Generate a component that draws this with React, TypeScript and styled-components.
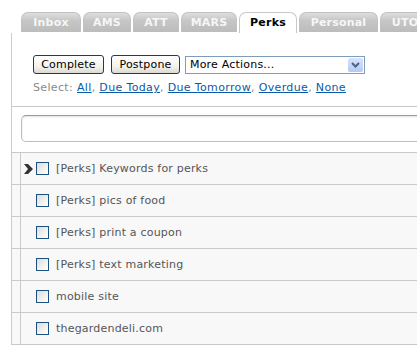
import styled, { createGlobalStyle } from "styled-components";

const Global = createGlobalStyle`
	html, body {
		margin: 0;
		padding: 0;
		background: #fff;
		overflow: hidden;
	}
	body {
		font-family: "DejaVu Sans", Verdana, sans-serif;
		font-size: 11px;
	}
`;

const tabs = [
	{ name: "Inbox", width: 60 },
	{ name: "AMS", width: 48 },
	{ name: "ATT", width: 46 },
	{ name: "MARS", width: 56 },
	{ name: "Perks", width: 58 },
	{ name: "Personal", width: 79 },
	{ name: "UTO", width: 50 },
];
const tasks = [
	"[Perks] Keywords for perks",
	"[Perks] pics of food",
	"[Perks] print a coupon",
	"[Perks] text marketing",
	"mobile site",
	"thegardendeli.com",
];
const links = ["All", "Due Today", "Due Tomorrow", "Overdue", "None"];

export default function App() {
	return (
		<>
			<Global />
			<Page>
				<TabBar>
					{tabs.map((t) => (
						<Tab key={t.name} $active={t.name === "Perks"} $w={t.width}>
							{t.name}
						</Tab>
					))}
				</TabBar>
				<Panel>
					<Actions>
						<ButtonRow>
							<Button $w={71}>Complete</Button>
							<Button $w={69}>Postpone</Button>
							<FakeSelect>
								<span>More Actions...</span>
								<SelectArrow>
									<svg width="9" height="6" viewBox="0 0 9 6">
										<path d="M1 1 L4.5 4.5 L8 1" fill="none" stroke="#4d6185" strokeWidth="2" />
									</svg>
								</SelectArrow>
							</FakeSelect>
						</ButtonRow>
						<SelectLine>
							Select:{" "}
							{links.map((l, i) => (
								<span key={l}>
									<Link href="#">{l}</Link>
									{i < links.length - 1 ? ", " : ""}
								</span>
							))}
						</SelectLine>
					</Actions>
					<SearchArea>
						<SearchInput />
					</SearchArea>
					<List>
						{tasks.map((t, i) => (
							<Row key={t}>
								<Gutter />
								<Cell>
									<Pointer>{i === 0 && <Chevron />}</Pointer>
									<Check />
									<TaskName>{t}</TaskName>
								</Cell>
							</Row>
						))}
					</List>
				</Panel>
			</Page>
		</>
	);
}

const Chevron = () => (
	<svg width="9" height="10" viewBox="0 0 9 10">
		<path d="M0 0 H4 L9 5 L4 10 H0 L4 5 Z" fill="#333" />
	</svg>
);

const Page = styled.div`
	padding: 12px 0 0 11px;
	width: 406px;
`;

const TabBar = styled.div`
	display: flex;
	gap: 2px;
	padding-left: 10px;
	height: 21px;
	white-space: nowrap;
	overflow: hidden;
`;

const Tab = styled.div<{ $active?: boolean; $w: number }>`
	flex: none;
	box-sizing: border-box;
	width: ${(p) => p.$w}px;
	height: ${(p) => (p.$active ? "22px" : "20px")};
	text-align: center;
	border-radius: 7px 7px 0 0;
	font-weight: bold;
	font-size: 11px;
	line-height: 19px;
	letter-spacing: 0.2px;
	border: 1px solid ${(p) => (p.$active ? "#c8c8c8" : "#c2c2c2")};
	border-bottom: none;
	color: ${(p) => (p.$active ? "#000" : "#f6f6f6")};
	background: ${(p) =>
		p.$active ? "#fff" : "linear-gradient(#dedede, #c6c6c6 40%, #bcbcbc)"};
	position: relative;
	z-index: 1;
`;

const Panel = styled.div`
	border-left: 1px solid #cfcdc2;
	border-bottom: 1px solid #c8c8c8;
`;

const Actions = styled.div`
	padding: 22px 0 0 21px;
	height: 51px;
	border-bottom: 1px solid #c8c8c8;
`;

const ButtonRow = styled.div`
	display: flex;
	align-items: flex-start;
	height: 19px;
`;

const Button = styled.button<{ $w: number }>`
	box-sizing: border-box;
	width: ${(p) => p.$w}px;
	height: 19px;
	padding: 0;
	margin-right: 7px;
	border: 1px solid #1c3a68;
	border-radius: 3px;
	background: linear-gradient(#ffffff, #f4f3ee 60%, #dcdad0);
	font-family: "DejaVu Sans", Verdana, sans-serif;
	font-size: 11px;
	letter-spacing: 0.2px;
	color: #000;
	line-height: 16px;
	&:last-of-type {
		margin-right: 5px;
	}
`;

const FakeSelect = styled.div`
	box-sizing: border-box;
	width: 180px;
	height: 18px;
	margin-top: 1px;
	border: 1px solid #7f9db9;
	display: flex;
	align-items: center;
	justify-content: space-between;
	padding-left: 4px;
	color: #000;
	letter-spacing: 0.2px;
	line-height: 16px;
`;

const SelectArrow = styled.div`
	width: 15px;
	height: 14px;
	margin-right: 1px;
	border-radius: 2px;
	background: linear-gradient(#d8e4fc, #b4c8f6);
	display: flex;
	align-items: center;
	justify-content: center;
`;

const SelectLine = styled.div`
	margin-top: 7px;
	color: #8a8a8a;
	line-height: 14px;
	letter-spacing: 0.35px;
	white-space: nowrap;
`;

const Link = styled.a`
	color: #0b5aa8;
	text-decoration: underline;
`;

const SearchArea = styled.div`
	padding: 8px 0 10px 9px;
	border-bottom: 1px solid #c8c8c8;
`;

const SearchInput = styled.div`
	box-sizing: border-box;
	height: 27px;
	width: 420px;
	border: 1px solid #bdbdbd;
	border-top-color: #9a9a9a;
	border-radius: 5px;
	box-shadow: inset 0 1px 2px rgba(0, 0, 0, 0.12);
	background: #fff;
`;

const List = styled.div`
	background: #f8f8f8;
`;

const Row = styled.div`
	display: flex;
	height: 31px;
	border-bottom: 1px solid #cacaca;
	&:last-child {
		border-bottom: none;
	}
`;

const Gutter = styled.div`
	width: 8px;
	flex: none;
	border-right: 1px solid #cacaca;
`;

const Cell = styled.div`
	display: flex;
	align-items: center;
	padding-left: 3px;
`;

const Pointer = styled.div`
	width: 9px;
	height: 10px;
	margin-right: 3px;
	display: flex;
`;

const Check = styled.div`
	box-sizing: border-box;
	width: 13px;
	height: 13px;
	border: 1px solid #1c5180;
	background: linear-gradient(135deg, #dcdcd6, #f6f6f4 70%, #ffffff);
	margin-right: 7px;
`;

const TaskName = styled.span`
	color: #555;
	font-size: 11px;
	letter-spacing: 0.2px;
	white-space: nowrap;
`;
